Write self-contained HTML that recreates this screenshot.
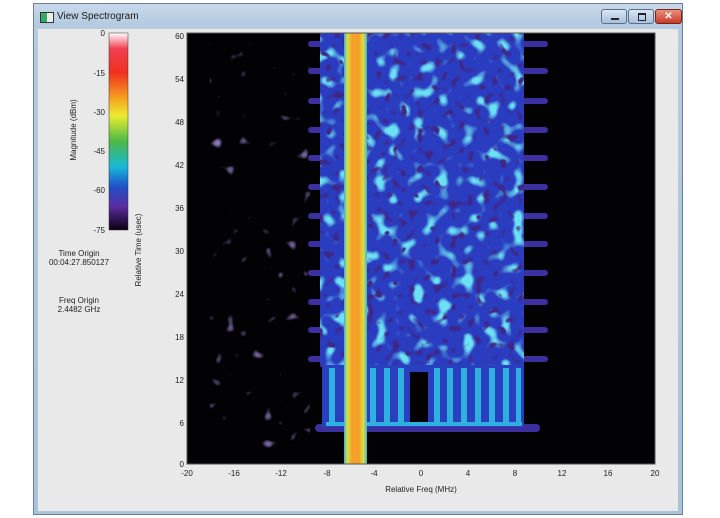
<!DOCTYPE html>
<html><head><style>
body{margin:0;width:720px;height:518px;background:#fff;overflow:hidden;font-family:"Liberation Sans",sans-serif;}
.win{position:absolute;left:33px;top:3px;width:650px;height:512px;background:linear-gradient(#c8d9ea,#b5cbe0 20px,#a9c3dc);border:1px solid #6d7f93;box-sizing:border-box;}
.title{position:absolute;left:23px;top:7px;font-size:10px;color:#1a1a1a;}
.ico{position:absolute;left:6px;top:8px;width:12px;height:9px;border:1px solid #333;background:linear-gradient(90deg,#3a6 0 50%,#eee 50%);}
.btn{position:absolute;top:5px;height:15px;border:1px solid #5c6f86;border-radius:3px;background:linear-gradient(#d9e6f3,#a9c0da);box-sizing:border-box;}
.client{position:absolute;left:4px;top:25px;width:640px;height:482px;background:#e9e9e9;}
</style></head><body>
<div class="win">
 <div class="ico"></div>
 <div class="title">View Spectrogram</div>
 <div class="btn" style="left:567px;width:26px"><div style="position:absolute;left:9px;top:8px;width:8px;height:2px;background:#223"></div></div>
 <div class="btn" style="left:594px;width:26px"><div style="position:absolute;left:9px;top:3px;width:6px;height:5px;border:1px solid #223;border-top-width:2px"></div></div>
 <div class="btn" style="left:621px;width:27px;background:linear-gradient(#e8917c,#c8392a);border-color:#7a2418;color:#fff;font-size:10px;text-align:center;line-height:13px;font-weight:bold">✕</div>
 <div class="client"></div>
</div>
<svg style="position:absolute;left:0;top:0" width="720" height="518">
 <defs>
  <linearGradient id="cb" x1="0" y1="0" x2="0" y2="1">
   <stop offset="0" stop-color="#fff"/><stop offset="0.08" stop-color="#f04050"/><stop offset="0.2" stop-color="#ee3020"/>
   <stop offset="0.33" stop-color="#f6a020"/><stop offset="0.42" stop-color="#ecec30"/><stop offset="0.55" stop-color="#4cb848"/>
   <stop offset="0.68" stop-color="#18b8d8"/><stop offset="0.78" stop-color="#2050c8"/><stop offset="0.88" stop-color="#5a2ca0"/><stop offset="1" stop-color="#0a0010"/>
  </linearGradient>
  <linearGradient id="band" x1="0" x2="1">
   <stop offset="0" stop-color="#40b0d8"/><stop offset="0.15" stop-color="#d8e040"/><stop offset="0.35" stop-color="#f5a028"/><stop offset="0.65" stop-color="#f5a028"/><stop offset="0.85" stop-color="#d8e040"/><stop offset="1" stop-color="#40b0d8"/>
  </linearGradient>
  <filter id="n" x="0" y="0" width="1" height="1">
   <feTurbulence type="fractalNoise" baseFrequency="0.08" numOctaves="1" seed="4"/>
   <feColorMatrix values="0 0 0 0 0.15  0 0 0 0 0.75  0 0 0 0 0.9  6 0 0 0 -3.25"/>
  </filter>
  <filter id="d" x="0" y="0" width="1" height="1">
   <feTurbulence type="fractalNoise" baseFrequency="0.12" numOctaves="1" seed="9"/>
   <feColorMatrix values="0 0 0 0 0.05  0 0 0 0 0.02  0 0 0 0 0.25  8 0 0 0 -4.6"/>
  </filter>
  <filter id="p" x="0" y="0" width="1" height="1">
   <feTurbulence type="fractalNoise" baseFrequency="0.08" numOctaves="1" seed="2"/>
   <feColorMatrix values="0 0 0 0 0.25  0 0 0 0 0.18  0 0 0 0 0.5  8 0 0 0 -5.4"/>
  </filter>
 </defs>
 <rect x="109" y="33" width="19" height="197" fill="url(#cb)" stroke="#333" stroke-width="0.5"/>
 <rect x="187" y="33" width="468" height="431" fill="#020104"/>
 <rect x="210" y="40" width="100" height="420" filter="url(#p)"/>
 <g fill="#3c2fa0">
  <rect x="308" y="41" width="240" height="6" rx="3"/><rect x="308" y="68" width="240" height="6" rx="3"/>
  <rect x="308" y="98" width="240" height="6" rx="3"/><rect x="308" y="127" width="240" height="6" rx="3"/>
  <rect x="308" y="155" width="240" height="6" rx="3"/><rect x="308" y="184" width="240" height="6" rx="3"/>
  <rect x="308" y="213" width="240" height="6" rx="3"/><rect x="308" y="241" width="240" height="6" rx="3"/>
  <rect x="308" y="270" width="240" height="6" rx="3"/><rect x="308" y="299" width="240" height="6" rx="3"/>
  <rect x="308" y="327" width="240" height="6" rx="3"/><rect x="308" y="356" width="240" height="6" rx="3"/>
  <rect x="315" y="424" width="225" height="8" rx="4"/>
 </g>
 <rect x="320" y="33" width="204" height="334" fill="#2a3cc0"/>
 <rect x="320" y="33" width="204" height="334" filter="url(#n)"/>
 <rect x="320" y="33" width="204" height="334" filter="url(#d)"/>
 <rect x="322" y="365" width="202" height="62" fill="#2840c0"/>
 <g fill="#30b0e0">
  <rect x="329" y="368" width="6" height="56"/><rect x="370" y="368" width="6" height="56"/><rect x="384" y="368" width="6" height="56"/>
  <rect x="398" y="368" width="6" height="56"/><rect x="434" y="368" width="6" height="56"/><rect x="447" y="368" width="6" height="56"/>
  <rect x="461" y="368" width="6" height="56"/><rect x="475" y="368" width="6" height="56"/><rect x="489" y="368" width="6" height="56"/>
  <rect x="503" y="368" width="6" height="56"/><rect x="516" y="368" width="5" height="56"/>
  <rect x="326" y="422" width="196" height="4"/>
 </g>
 <rect x="410" y="372" width="18" height="50" fill="#020104"/>
 <rect x="344" y="33" width="23" height="431" fill="url(#band)"/>
 <rect x="187" y="33" width="468" height="431" fill="none" stroke="#555" stroke-width="1"/>
 <g font-family="Liberation Sans,sans-serif" font-size="8" fill="#222">
  <g text-anchor="end">
   <text x="105" y="36">0</text><text x="105" y="76">-15</text><text x="105" y="115">-30</text>
   <text x="105" y="154">-45</text><text x="105" y="193">-60</text><text x="105" y="233">-75</text>
   <text x="184" y="39">60</text><text x="184" y="82">54</text><text x="184" y="125">48</text><text x="184" y="168">42</text>
   <text x="184" y="211">36</text><text x="184" y="254">30</text><text x="184" y="297">24</text><text x="184" y="340">18</text>
   <text x="184" y="383">12</text><text x="184" y="426">6</text><text x="184" y="467">0</text>
  </g>
  <g text-anchor="middle">
   <text x="187" y="476">-20</text><text x="234" y="476">-16</text><text x="281" y="476">-12</text><text x="327" y="476">-8</text>
   <text x="374" y="476">-4</text><text x="421" y="476">0</text><text x="468" y="476">4</text><text x="515" y="476">8</text>
   <text x="562" y="476">12</text><text x="608" y="476">16</text><text x="655" y="476">20</text>
   <text x="421" y="492">Relative Freq (MHz)</text>
   <text x="79" y="256">Time Origin</text><text x="79" y="265">00:04:27.850127</text>
   <text x="79" y="303">Freq Origin</text><text x="79" y="312">2.4482 GHz</text>
   <text transform="translate(76,130) rotate(-90)">Magnitude (dBm)</text>
   <text transform="translate(141,250) rotate(-90)">Relative Time (usec)</text>
  </g>
 </g>
</svg>
</body></html>
